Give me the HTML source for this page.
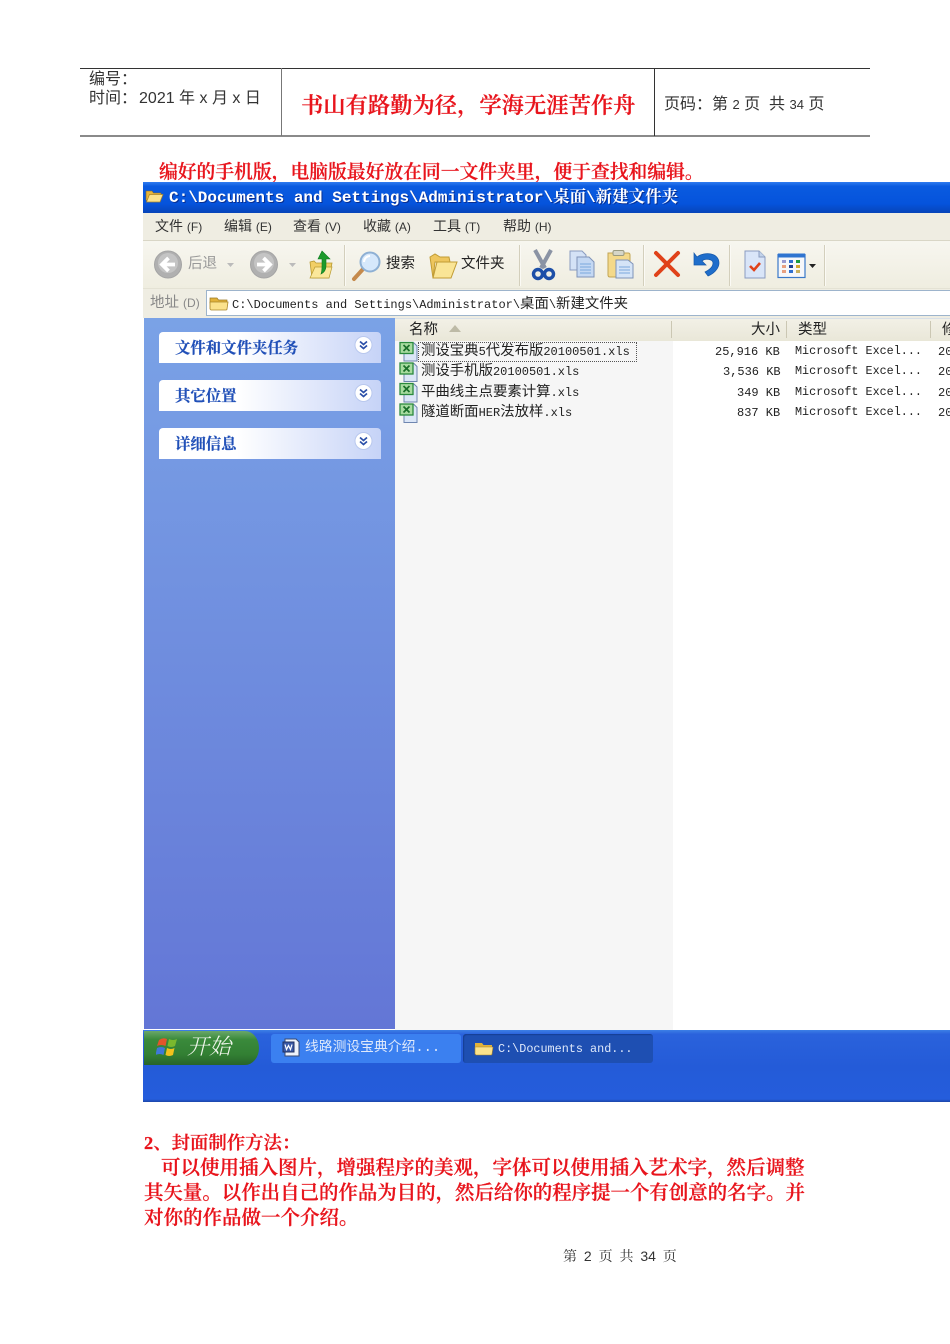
<!DOCTYPE html>
<html lang="zh-CN"><head><meta charset="utf-8"><title>第2页</title>
<style>
html,body{margin:0;padding:0;background:#fff}
#p{position:relative;width:950px;height:1344px;overflow:hidden;background:#fff;font-family:"Liberation Sans","Noto Sans CJK SC",sans-serif;filter:blur(.3px)}
#p div,#p span.t,#p svg{position:absolute}
.t{position:absolute;white-space:nowrap;line-height:1}
.r{color:#e8141c;font-family:"Liberation Serif","Noto Serif CJK SC",serif;font-weight:600;-webkit-text-stroke:.25px #e8141c}
.m{font-family:"Liberation Mono","Noto Sans CJK SC",monospace;font-size:12px;color:#222}
.n{font-size:14.4px}
.n b{font-weight:400;font-size:12px}
.u{font-family:"Liberation Sans","Noto Sans CJK SC",sans-serif;font-size:14px;color:#333}
.g{color:#333;font-size:16px}
.panel{left:159px;width:222px;height:31px;border-radius:4px 4px 0 0;background:linear-gradient(90deg,#fff 0%,#fff 35%,#c6d3f7 100%)}
.ptx{left:175px;font-family:"Liberation Serif","Noto Serif CJK SC",serif;font-weight:700;font-size:15.4px;color:#2150b8;-webkit-text-stroke:.2px #2150b8}
.sep{width:1px;top:245px;height:41px;background:#d3cfbc;border-right:1px solid #fbfaf5}
</style></head><body><div id="p">

<div style="left:80px;top:68px;width:790px;height:1px;background:#333"></div>
<div style="left:80px;top:135px;width:790px;height:2px;background:#8a8a8a"></div>
<div style="left:280.5px;top:68px;width:1.5px;height:68px;background:#777"></div>
<div style="left:654px;top:68px;width:1px;height:68px;background:#333"></div>
<span class="t g" style="left:89px;top:72px">编号：</span>
<span class="t g" style="left:89px;top:91px">时间：<span style="margin-left:2px">2021</span> 年 x 月 x 日</span>
<span class="t r" style="left:301px;top:95px;font-size:22.3px">书山有路勤为径，学海无涯苦作舟</span>
<span class="t g" style="left:664px;top:97px">页码：第 <span style="font-size:13px">2</span> 页&nbsp; 共 <span style="font-size:13px">34</span> 页</span>

<span class="t r" style="left:159px;top:164px;font-size:18.8px">编好的手机版，电脑版最好放在同一文件夹里，便于查找和编辑。</span>

<!-- title bar -->
<div style="left:143px;top:182px;width:807px;height:31px;background:linear-gradient(180deg,#2f7cf0 0%,#0a5be0 14%,#0553dc 70%,#0744b8 100%)"></div>
<svg style="left:145px;top:187px" width="19" height="17" viewBox="0 0 19 17"><path d="M1 4h6l1.500 2H16v2H5L2 14 1 13z" fill="#e6b53c" stroke="#8a6a20" stroke-width=".6"/><path d="M4.500 7.500H18L15 15H1.500z" fill="#fbe28c" stroke="#a98528" stroke-width=".7"/></svg>
<span class="t" style="left:169px;top:190px;font-family:'Liberation Mono','Noto Serif CJK SC',monospace;font-weight:700;font-size:16px;color:#fff;text-shadow:1px 1px 0 #0a2f90">C:\Documents and Settings\Administrator\<span style="font-size:16.5px">桌面</span>\<span style="font-size:16.5px">新建文件夹</span></span>

<!-- menu -->
<div style="left:143px;top:213px;width:807px;height:28px;background:#efede2;border-bottom:1px solid #d9d6c6;box-sizing:border-box"></div>
<span class="t u" style="left:155px;top:219px">文件 <span style="font-size:12px">(F)</span></span>
<span class="t u" style="left:224px;top:219px">编辑 <span style="font-size:12px">(E)</span></span>
<span class="t u" style="left:293px;top:219px">查看 <span style="font-size:12px">(V)</span></span>
<span class="t u" style="left:363px;top:219px">收藏 <span style="font-size:12px">(A)</span></span>
<span class="t u" style="left:433px;top:219px">工具 <span style="font-size:12px">(T)</span></span>
<span class="t u" style="left:503px;top:219px">帮助 <span style="font-size:12px">(H)</span></span>

<!-- toolbar -->
<div style="left:143px;top:241px;width:807px;height:47px;background:linear-gradient(180deg,#f7f6ef,#efede0)"></div>
<div class="sep" style="left:344px"></div><div class="sep" style="left:519px"></div><div class="sep" style="left:643px"></div><div class="sep" style="left:729px"></div><div class="sep" style="left:824px"></div>

<svg style="left:153px;top:250px" width="190" height="30" viewBox="0 0 190 30">
<circle cx="15" cy="14.500" r="13.500" fill="#b0b0b0" stroke="#a4a4a4"/><circle cx="15" cy="13" r="10" fill="#c4c4c4"/>
<path d="M22 14.500H10M15.500 8l-6.500 6.500 6.500 6.500" fill="none" stroke="#fff" stroke-width="3.800"/>
<path d="M74 13h7l-3.500 4z" fill="#bbb"/>
<circle cx="111" cy="14.500" r="13.500" fill="#b0b0b0" stroke="#a4a4a4"/><circle cx="111" cy="13" r="10" fill="#c4c4c4"/>
<path d="M104 14.500H116M110.500 8l6.500 6.500-6.500 6.500" fill="none" stroke="#fff" stroke-width="3.800"/>
<path d="M136 13h7l-3.500 4z" fill="#bbb"/>
<path d="M157 12l4-1 2 2h16l-3 15h-17z" fill="#f2cf66" stroke="#b89a30" stroke-width=".8"/>
<path d="M157 28l5-11h17l-3 11z" fill="#fbe79a" stroke="#b89a30" stroke-width=".7"/>
<path d="M169 1l8 8h-4v7c0 3-1 6-5 8 1-3 1-5 1-8V9h-4z" fill="#1d9a2c" stroke="#0d7a20" stroke-width=".6"/>
</svg>
<span class="t u" style="left:188px;top:257px;color:#999;font-size:14.500px">后退</span>

<svg style="left:351px;top:250px" width="34" height="32" viewBox="0 0 34 32">
<path d="M3 29l10-11" stroke="#c58a4c" stroke-width="4" stroke-linecap="round"/>
<circle cx="19" cy="12" r="9.500" fill="#d6e8fb" stroke="#8eb0d4" stroke-width="2"/>
<path d="M13 12a6 6 0 0 1 6-6" stroke="#fff" stroke-width="2" fill="none"/>
</svg>
<span class="t u" style="left:386px;top:257px;font-size:14.500px;color:#222">搜索</span>
<svg style="left:429px;top:252px" width="30" height="28" viewBox="0 0 30 28">
<path d="M1 5l5-3 5 3h9l1 5H6l-2 16z" fill="#eec65e" stroke="#c19c34"/>
<path d="M4 26L8 10h20l-6 16z" fill="#fae596" stroke="#c19c34"/>
</svg>
<span class="t u" style="left:461px;top:257px;font-size:14.500px;color:#222">文件夹</span>

<svg style="left:530px;top:248px" width="300" height="34" viewBox="0 0 300 34">
<!-- scissors -->
<path d="M5 2l10 18M21 2L11 20" stroke="#8a93a4" stroke-width="4"/>
<circle cx="8" cy="26" r="4.500" fill="none" stroke="#1d4fa8" stroke-width="3.400"/>
<circle cx="19" cy="26" r="4.500" fill="none" stroke="#1d4fa8" stroke-width="3.400"/>
<!-- copy -->
<path d="M40 3h12l4 4v15H40z" fill="#d4e2f6" stroke="#8a9cc0"/>
<path d="M47 9h12l5 5v15H47z" fill="#c4d8f3" stroke="#7f93b8"/>
<path d="M50 16h11M50 19h11M50 22h11M50 25h11" stroke="#7aa8dc"/>
<!-- paste -->
<path d="M78 5h20q2 0 2 2v22H80q-2 0-2-2z" fill="#f4d98a" stroke="#c2a554"/>
<rect x="83" y="2.500" width="11" height="5" rx="1.500" fill="#d6d6c8" stroke="#9a9a80"/>
<path d="M86 12h12l5 4v14H86z" fill="#d5e4f7" stroke="#7f93b8"/>
<path d="M89 19h11M89 22h11M89 25h11" stroke="#7aa8dc"/>
<!-- delete -->
<path d="M126 5l22 22M148 5l-22 22" stroke="#e0421a" stroke-width="4" stroke-linecap="round"/>
<!-- undo -->
<path d="M167 9c8-6 22-4 22 6 0 6-6 11-11 13l-3-4c4-2 8-5 8-9 0-4-8-5-11-2l4 4h-12V5l3 4z" fill="#1f6ecb" stroke="#1558aa" stroke-width=".7"/>
<!-- doc check -->
<path d="M215 3h14l6 6v21h-20z" fill="#d9e5f8" stroke="#8a9cc0"/><path d="M229 3v6h6" fill="#c3d3ea" stroke="#8a9cc0"/>
<path d="M220 18l4 4 6-7" fill="none" stroke="#e0421a" stroke-width="2.600"/>
<!-- views -->
<rect x="248" y="6.500" width="27" height="23" fill="#f6f7fa" stroke="#3a78c8" stroke-width="1.200"/>
<rect x="248" y="5.500" width="27" height="4" fill="#2f74d0"/>
<path d="M252 12h4v3h-4z" fill="#9a9ad0"/><path d="M259 12h4v3h-4z" fill="#2f6fd0"/><path d="M266 12h4v3h-4z" fill="#1d9a40"/>
<path d="M252 17h4v3h-4z" fill="#e8a080"/><path d="M259 17h4v3h-4z" fill="#1f3f90"/><path d="M266 17h4v3h-4z" fill="#d4a830"/>
<path d="M252 22h4v3h-4z" fill="#e8a080"/><path d="M259 22h4v3h-4z" fill="#2f6fd0"/><path d="M266 22h4v3h-4z" fill="#c8b060"/>
<path d="M279 16h7l-3.500 4z" fill="#222"/>
</svg>

<!-- address -->
<div style="left:143px;top:288px;width:807px;height:30px;background:#efede2;border-top:1px solid #e4e2d4;box-sizing:border-box"></div>
<span class="t u" style="left:150px;top:296px;color:#888;font-size:14.500px">地址 <span style="font-size:12px">(D)</span></span>
<div style="left:206px;top:290px;width:750px;height:26px;background:#fff;border:1px solid #9db4cc;box-sizing:border-box"></div>
<svg style="left:209px;top:295px" width="20" height="16" viewBox="0 0 20 16"><path d="M1 3h7l1.500 2H18v3H1z" fill="#e2b23a" stroke="#9a7a22" stroke-width=".7"/><path d="M1 14V7h18l-1 7q0 1-1 1H2z" fill="#fbe28c" stroke="#a98528" stroke-width=".8"/></svg>
<span class="t m n" style="left:232px;top:298px"><b>C:\Documents and Settings\Administrator\</b>桌面<b>\</b>新建文件夹</span>

<!-- sidebar -->
<div style="left:144px;top:318px;width:251px;height:711px;background:linear-gradient(180deg,#7aa2e6,#6376d6)"></div>
<div class="panel" style="top:332px"></div><div class="panel" style="top:380px"></div><div class="panel" style="top:428px"></div>
<span class="t ptx" style="top:341px">文件和文件夹任务</span>
<span class="t ptx" style="top:389px">其它位置</span>
<span class="t ptx" style="top:437px">详细信息</span>
<svg style="left:354px;top:335px" width="20" height="116" viewBox="0 0 20 116">
<g><circle cx="9.500" cy="10" r="8.500" fill="#fff" stroke="#b9c8ee"/><path d="M6 6.500l3.500 3 3.500-3M6 10.500l3.500 3 3.500-3" fill="none" stroke="#2b4fa8" stroke-width="1.700"/></g>
<g transform="translate(0 48)"><circle cx="9.500" cy="10" r="8.500" fill="#fff" stroke="#b9c8ee"/><path d="M6 6.500l3.500 3 3.500-3M6 10.500l3.500 3 3.500-3" fill="none" stroke="#2b4fa8" stroke-width="1.700"/></g>
<g transform="translate(0 96)"><circle cx="9.500" cy="10" r="8.500" fill="#fff" stroke="#b9c8ee"/><path d="M6 6.500l3.500 3 3.500-3M6 10.500l3.500 3 3.500-3" fill="none" stroke="#2b4fa8" stroke-width="1.700"/></g>
</svg>

<!-- list -->
<div style="left:395px;top:341px;width:278px;height:689px;background:#f6f6f6"></div>
<div style="left:395px;top:318px;width:555px;height:23px;background:linear-gradient(180deg,#f2f0e6,#e9e7d8);border-top:1px solid #d8e0e8;box-sizing:border-box"></div>
<div style="left:671px;top:321px;width:1px;height:17px;background:#cbc7b3"></div>
<div style="left:786px;top:321px;width:1px;height:17px;background:#cbc7b3"></div>
<div style="left:930px;top:321px;width:1px;height:17px;background:#cbc7b3"></div>
<span class="t u" style="left:409px;top:323px;font-size:14.500px;color:#222">名称</span>
<svg style="left:449px;top:325px" width="12" height="7"><path d="M0 7L6 0l6 7z" fill="#bdbaa6"/></svg>
<span class="t u" style="left:751px;top:323px;font-size:14.500px;color:#222">大小</span>
<span class="t u" style="left:798px;top:323px;font-size:14.500px;color:#222">类型</span>
<span class="t u" style="left:942px;top:323px;font-size:14.500px;color:#222">修</span>

<div style="left:418px;top:342px;width:219px;height:20px;border:1px dotted #555;box-sizing:border-box"></div>
<svg style="left:399px;top:341px" width="20" height="85" viewBox="0 0 20 85">
<g><path d="M5 2h10l3 3v15H5z" fill="#dbe6f7" stroke="#6f86b0"/><rect x="1" y="1.500" width="13" height="11" fill="#a8dba0" stroke="#2a8a3c" stroke-width="1.300"/><path d="M4.500 4l6 6M10.500 4l-6 6" stroke="#1a6e2a" stroke-width="1.700"/></g>
<g transform="translate(0 20.500)"><path d="M5 2h10l3 3v15H5z" fill="#dbe6f7" stroke="#6f86b0"/><rect x="1" y="1.500" width="13" height="11" fill="#a8dba0" stroke="#2a8a3c" stroke-width="1.300"/><path d="M4.500 4l6 6M10.500 4l-6 6" stroke="#1a6e2a" stroke-width="1.700"/></g>
<g transform="translate(0 41)"><path d="M5 2h10l3 3v15H5z" fill="#dbe6f7" stroke="#6f86b0"/><rect x="1" y="1.500" width="13" height="11" fill="#a8dba0" stroke="#2a8a3c" stroke-width="1.300"/><path d="M4.500 4l6 6M10.500 4l-6 6" stroke="#1a6e2a" stroke-width="1.700"/></g>
<g transform="translate(0 61.500)"><path d="M5 2h10l3 3v15H5z" fill="#dbe6f7" stroke="#6f86b0"/><rect x="1" y="1.500" width="13" height="11" fill="#a8dba0" stroke="#2a8a3c" stroke-width="1.300"/><path d="M4.500 4l6 6M10.500 4l-6 6" stroke="#1a6e2a" stroke-width="1.700"/></g>
</svg>
<span class="t m n" style="left:421px;top:345px">测设宝典<b>5</b>代发布版<b>20100501.xls</b></span>
<span class="t m n" style="left:421px;top:365px">测设手机版<b>20100501.xls</b></span>
<span class="t m n" style="left:421px;top:386px">平曲线主点要素计算<b>.xls</b></span>
<span class="t m n" style="left:421px;top:406px">隧道断面<b>HER</b>法放样<b>.xls</b></span>

<span class="t m" style="left:715px;top:346px">25,916 KB</span>
<span class="t m" style="left:723px;top:366px">3,536 KB</span>
<span class="t m" style="left:737px;top:387px">349 KB</span>
<span class="t m" style="left:737px;top:407px">837 KB</span>
<span class="t m" style="left:795px;top:346px;font-size:11.750px">Microsoft Excel...</span>
<span class="t m" style="left:795px;top:366px;font-size:11.750px">Microsoft Excel...</span>
<span class="t m" style="left:795px;top:387px;font-size:11.750px">Microsoft Excel...</span>
<span class="t m" style="left:795px;top:407px;font-size:11.750px">Microsoft Excel...</span>
<span class="t m" style="left:938px;top:346px">20</span>
<span class="t m" style="left:938px;top:366px">20</span>
<span class="t m" style="left:938px;top:387px">20</span>
<span class="t m" style="left:938px;top:407px">20</span>

<!-- taskbar -->
<div style="left:143px;top:1030px;width:807px;height:72px;background:linear-gradient(180deg,#3c7fe6 0%,#2a62dc 6%,#245bd8 50%,#255ddc 96%,#1c46a8 100%)"></div>
<div style="left:144px;top:1031px;width:115px;height:34px;border-radius:0 14px 14px 0/0 17px 17px 0;background:linear-gradient(180deg,#6aa76a 0%,#3a8a3b 25%,#327f33 70%,#276429 100%)"></div>
<svg style="left:156px;top:1035px" width="24" height="24" viewBox="0 0 24 24">
<path d="M3 5q4-3 8-1l-1.500 7Q5 9 1 11z" fill="#e2552a"/><path d="M13 4q4 2 8 0l-2 7q-4 2-7.500 0z" fill="#7ab82e"/>
<path d="M1 13q4-2 8 0l-1.500 7q-4-2-8 0z" fill="#3f78d8"/><path d="M11 13q4 2 7.500 0L17 20q-4 2-7.500 0z" fill="#f2c21c"/></svg>
<span class="t" style="left:187px;top:1035px;font-family:'Noto Serif CJK SC',serif;font-style:italic;font-size:22px;color:#f2f7ee;font-weight:300">开始</span>

<div style="left:271px;top:1034px;width:190px;height:29px;border-radius:3px;background:#3b80f0"></div>
<div style="left:463px;top:1034px;width:190px;height:29px;border-radius:3px;background:#1e4fb2;box-shadow:inset 1px 1px 1px #173f94"></div>
<svg style="left:282px;top:1038px" width="19" height="19" viewBox="0 0 19 19"><path d="M3 1h11l3 3v14H3z" fill="#eef3fb" stroke="#3a4a70"/><rect x="1" y="4" width="11" height="10" fill="#3a5aa8" stroke="#203060"/><path d="M3 6.500l1.500 5 2-4 2 4 1.500-5" fill="none" stroke="#fff" stroke-width="1.200"/></svg>
<span class="t m" style="left:305px;top:1042px;color:#dfe9fb;font-size:13.800px">线路测设宝典介绍...</span>
<svg style="left:474px;top:1040px" width="20" height="16" viewBox="0 0 20 16"><path d="M1 3h7l1.500 2H18v3H1z" fill="#e2b23a"/><path d="M1 14V7h18l-1 7q0 1-1 1H2z" fill="#fbe28c" stroke="#a98528" stroke-width=".6"/></svg>
<span class="t m" style="left:498px;top:1044px;color:#dfe9fb;font-size:11.800px">C:\Documents and...</span>

<!-- body text -->
<span class="t r" style="left:144px;top:1134px;font-size:18.400px">2、封面制作方法：</span>
<span class="t r" style="left:161px;top:1159px;font-size:19.500px">可以使用插入图片，增强程序的美观，字体可以使用插入艺术字，然后调整</span>
<span class="t r" style="left:144px;top:1184px;font-size:19.450px">其矢量。以作出自己的作品为目的，然后给你的程序提一个有创意的名字。并</span>
<span class="t r" style="left:144px;top:1209px;font-size:19.500px">对你的作品做一个介绍。</span>
<span class="t" style="left:563px;top:1249px;font-size:14px;color:#333;font-family:'Liberation Sans','Noto Serif CJK SC',serif;word-spacing:3px">第 2 页 共 34 页</span>

</div></body></html>
